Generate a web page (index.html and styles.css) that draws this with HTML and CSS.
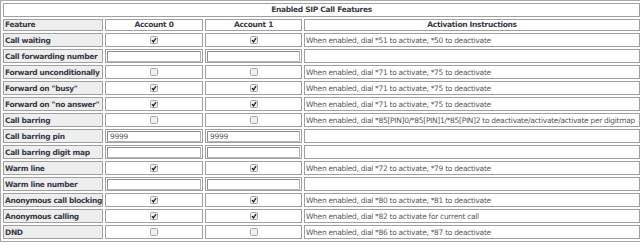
FILE: index.html
```html
<!DOCTYPE html>
<html>
<head>
<meta charset="utf-8">
<link rel="stylesheet" href="styles.css">
</head>
<body>
<table class="grid">
  <colgroup><col class="c1"><col class="c2"><col class="c3"><col class="c4"></colgroup>
  <tr class="r-title"><td colspan="4" class="title">Enabled SIP Call Features</td></tr>
  <tr class="r-head"><td class="label">Feature</td><td class="head">Account 0</td><td class="head">Account 1</td><td class="head">Activation Instructions</td></tr>
  <tr><td class="label">Call waiting</td>
    <td class="ctr"><svg class="cb" viewBox="0 0 8 8"><rect x="0.5" y="0.5" width="7" height="7" rx="1"/><path d="M2 4.1 L3.4 5.9 L6.1 2.1"/></svg></td>
    <td class="ctr"><svg class="cb" viewBox="0 0 8 8"><rect x="0.5" y="0.5" width="7" height="7" rx="1"/><path d="M2 4.1 L3.4 5.9 L6.1 2.1"/></svg></td>
    <td class="info">When enabled, dial *51 to activate, *50 to deactivate</td></tr>
  <tr><td class="label">Call forwarding number</td><td class="fld"><input class="txt" type="text" value=""></td><td class="fld"><input class="txt" type="text" value=""></td><td class="info"></td></tr>
  <tr><td class="label">Forward unconditionally</td>
    <td class="ctr"><svg class="cb" viewBox="0 0 8 8"><rect x="0.5" y="0.5" width="7" height="7" rx="1"/></svg></td>
    <td class="ctr"><svg class="cb" viewBox="0 0 8 8"><rect x="0.5" y="0.5" width="7" height="7" rx="1"/></svg></td>
    <td class="info">When enabled, dial *71 to activate, *75 to deactivate</td></tr>
  <tr><td class="label">Forward on "busy"</td>
    <td class="ctr"><svg class="cb" viewBox="0 0 8 8"><rect x="0.5" y="0.5" width="7" height="7" rx="1"/><path d="M2 4.1 L3.4 5.9 L6.1 2.1"/></svg></td>
    <td class="ctr"><svg class="cb" viewBox="0 0 8 8"><rect x="0.5" y="0.5" width="7" height="7" rx="1"/><path d="M2 4.1 L3.4 5.9 L6.1 2.1"/></svg></td>
    <td class="info">When enabled, dial *71 to activate, *75 to deactivate</td></tr>
  <tr><td class="label">Forward on "no answer"</td>
    <td class="ctr"><svg class="cb" viewBox="0 0 8 8"><rect x="0.5" y="0.5" width="7" height="7" rx="1"/><path d="M2 4.1 L3.4 5.9 L6.1 2.1"/></svg></td>
    <td class="ctr"><svg class="cb" viewBox="0 0 8 8"><rect x="0.5" y="0.5" width="7" height="7" rx="1"/><path d="M2 4.1 L3.4 5.9 L6.1 2.1"/></svg></td>
    <td class="info">When enabled, dial *71 to activate, *75 to deactivate</td></tr>
  <tr><td class="label">Call barring</td>
    <td class="ctr"><svg class="cb" viewBox="0 0 8 8"><rect x="0.5" y="0.5" width="7" height="7" rx="1"/></svg></td>
    <td class="ctr"><svg class="cb" viewBox="0 0 8 8"><rect x="0.5" y="0.5" width="7" height="7" rx="1"/></svg></td>
    <td class="info">When enabled, dial *85[PIN]0/*85[PIN]1/*85[PIN]2 to deactivate/activate/activate per digitmap</td></tr>
  <tr><td class="label">Call barring pin</td><td class="fld"><input class="txt" type="text" value="9999"></td><td class="fld"><input class="txt" type="text" value="9999"></td><td class="info"></td></tr>
  <tr><td class="label">Call barring digit map</td><td class="fld"><input class="txt" type="text" value=""></td><td class="fld"><input class="txt" type="text" value=""></td><td class="info"></td></tr>
  <tr><td class="label">Warm line</td>
    <td class="ctr"><svg class="cb" viewBox="0 0 8 8"><rect x="0.5" y="0.5" width="7" height="7" rx="1"/><path d="M2 4.1 L3.4 5.9 L6.1 2.1"/></svg></td>
    <td class="ctr"><svg class="cb" viewBox="0 0 8 8"><rect x="0.5" y="0.5" width="7" height="7" rx="1"/><path d="M2 4.1 L3.4 5.9 L6.1 2.1"/></svg></td>
    <td class="info">When enabled, dial *72 to activate, *79 to deactivate</td></tr>
  <tr><td class="label">Warm line number</td><td class="fld"><input class="txt" type="text" value=""></td><td class="fld"><input class="txt" type="text" value=""></td><td class="info"></td></tr>
  <tr><td class="label">Anonymous call blocking</td>
    <td class="ctr"><svg class="cb" viewBox="0 0 8 8"><rect x="0.5" y="0.5" width="7" height="7" rx="1"/><path d="M2 4.1 L3.4 5.9 L6.1 2.1"/></svg></td>
    <td class="ctr"><svg class="cb" viewBox="0 0 8 8"><rect x="0.5" y="0.5" width="7" height="7" rx="1"/><path d="M2 4.1 L3.4 5.9 L6.1 2.1"/></svg></td>
    <td class="info">When enabled, dial *80 to activate, *81 to deactivate</td></tr>
  <tr><td class="label">Anonymous calling</td>
    <td class="ctr"><svg class="cb" viewBox="0 0 8 8"><rect x="0.5" y="0.5" width="7" height="7" rx="1"/><path d="M2 4.1 L3.4 5.9 L6.1 2.1"/></svg></td>
    <td class="ctr"><svg class="cb" viewBox="0 0 8 8"><rect x="0.5" y="0.5" width="7" height="7" rx="1"/><path d="M2 4.1 L3.4 5.9 L6.1 2.1"/></svg></td>
    <td class="info">When enabled, dial *82 to activate for current call</td></tr>
  <tr><td class="label">DND</td>
    <td class="ctr"><svg class="cb" viewBox="0 0 8 8"><rect x="0.5" y="0.5" width="7" height="7" rx="1"/></svg></td>
    <td class="ctr"><svg class="cb" viewBox="0 0 8 8"><rect x="0.5" y="0.5" width="7" height="7" rx="1"/></svg></td>
    <td class="info">When enabled, dial *86 to activate, *87 to deactivate</td></tr>
</table>
</body>
</html>
```
FILE: styles.css
```css
html, body {
  margin: 0;
  padding: 0;
  background: #ffffff;
}
.grid {
  width: 640px;
  border: 1px solid #a8a8a8;
  border-spacing: 2px;
  table-layout: fixed;
  font-family: "DejaVu Sans", Verdana, sans-serif;
  font-size: 7.5px;
  letter-spacing: -0.3px;
  color: #444;
}
.c1 { width: 100px; }
.c2 { width: 98px; }
.c3 { width: 97px; }
.c4 { width: 336px; }
.grid td {
  border: 1px solid #a0a0a0;
  padding: 0 1px;
  height: 12px;
  line-height: 11px;
  white-space: nowrap;
  overflow: hidden;
  vertical-align: middle;
}
.r-title td { height: 12px; line-height: 10px; }
.r-head td { height: 10px; line-height: 10px; }
.title {
  text-align: center;
  font-weight: bold;
  color: #3a3a46;
}
.label {
  background: #eeeeee;
  font-weight: bold;
  letter-spacing: -0.35px;
  color: #3a3a46;
}
.head {
  text-align: center;
  font-weight: bold;
  color: #3a3a46;
}
.ctr { text-align: center; }
.info { color: #5a5a5a; }
.cb {
  width: 8px;
  height: 8px;
  display: block;
  margin: 0 auto;
}
.cb rect {
  fill: #f0f0f0;
  stroke: #a6a6a6;
  stroke-width: 1;
}
.cb path {
  fill: none;
  stroke: #222;
  stroke-width: 1.3;
}
.fld { padding: 0 1px; }
.txt {
  display: block;
  box-sizing: border-box;
  width: 100%;
  height: 11px;
  margin: 0;
  padding: 0 2px;
  border: 1px solid #b4b4b4;
  border-top-color: #8c8c8c;
  border-left-color: #8c8c8c;
  font-family: "DejaVu Sans", Verdana, sans-serif;
  font-size: 7.5px;
  letter-spacing: -0.3px;
  color: #555;
  background: #fff;
  outline: none;
}
```
